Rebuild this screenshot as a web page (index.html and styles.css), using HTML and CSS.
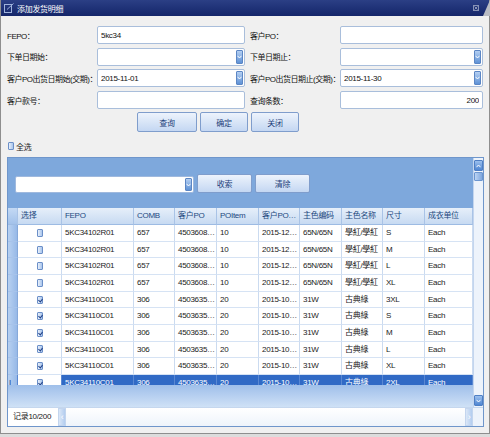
FILE: index.html
```html
<!DOCTYPE html>
<html lang="zh">
<head>
  <meta charset="UTF-8">
  <title>添加发货明细</title>
  <link rel="stylesheet" href="styles.css">
</head>
<body>
  <div class="window">
    <div class="titlebar">
      <svg class="title-icon" width="10" height="10" viewBox="0 0 10 10"><rect x="0.5" y="1.5" width="7" height="8" fill="none" stroke="#9fb3dc"/><path d="M3 6.5 L9.5 0.5" stroke="#9fb3dc"/></svg>
      <span class="title">添加发货明细</span>
      <svg class="close-icon" width="6" height="6" viewBox="0 0 6 6"><rect x="0.5" y="0.5" width="5" height="5" fill="none" stroke="#8792b5"/><path d="M1.5 1.5 L4.5 4.5 M4.5 1.5 L1.5 4.5" stroke="#8792b5"/></svg>
      <svg class="corner" width="7" height="16" viewBox="0 0 7 16"><polygon points="7,0 7,16 0,16" fill="#b9bcc4"/></svg>
    </div>

    <div class="content">
      <!-- query conditions -->
      <div class="query-form">
        <label class="lbl">FEPO：</label>
        <div class="field"><input type="text" value="5kc34"></div>
        <label class="lbl lbl-right">客户PO：</label>
        <div class="field"><input type="text"></div>

        <label class="lbl">下单日期始：</label>
        <div class="field"><input type="text"><span class="drop"><svg width="5" height="4" viewBox="0 0 5 4"><path d="M0.5 0.8 L2.5 3 L4.5 0.8" stroke="#fff" fill="none"/></svg></span></div>
        <label class="lbl lbl-right">下单日期止：</label>
        <div class="field"><input type="text"><span class="drop"><svg width="5" height="4" viewBox="0 0 5 4"><path d="M0.5 0.8 L2.5 3 L4.5 0.8" stroke="#fff" fill="none"/></svg></span></div>

        <label class="lbl">客户PO出货日期始(交期)：</label>
        <div class="field"><input type="text" value="2015-11-01"><span class="drop"><svg width="5" height="4" viewBox="0 0 5 4"><path d="M0.5 0.8 L2.5 3 L4.5 0.8" stroke="#fff" fill="none"/></svg></span></div>
        <label class="lbl lbl-right">客户PO出货日期止(交期)：</label>
        <div class="field"><input type="text" value="2015-11-30"><span class="drop"><svg width="5" height="4" viewBox="0 0 5 4"><path d="M0.5 0.8 L2.5 3 L4.5 0.8" stroke="#fff" fill="none"/></svg></span></div>

        <label class="lbl">客户款号：</label>
        <div class="field"><input type="text"></div>
        <label class="lbl lbl-right">查询条数：</label>
        <div class="field"><input type="text" class="num" value="200"></div>
      </div>

      <div class="actions">
        <button class="btn btn-query">查询</button>
        <button class="btn">确定</button>
        <button class="btn">关闭</button>
      </div>

      <div class="select-all"><span class="chk"></span>全选</div>

      <!-- result grid -->
      <div class="grid-panel">
        <div class="grid-main">
          <div class="grid-toolbar">
            <div class="combo"><span class="combo-text"></span><span class="drop"><svg width="5" height="4" viewBox="0 0 5 4"><path d="M0.5 0.8 L2.5 3 L4.5 0.8" stroke="#fff" fill="none"/></svg></span></div>
            <button class="btn btn-tool">收索</button>
            <button class="btn btn-tool">清除</button>
          </div>

          <div class="grid-row grid-head">
            <div class="cell rowhead"></div>
            <div class="cell">选择</div>
            <div class="cell">FEPO</div>
            <div class="cell">COMB</div>
            <div class="cell">客户PO</div>
            <div class="cell">POItem</div>
            <div class="cell">客户PO出货日期</div>
            <div class="cell">主色编码</div>
            <div class="cell">主色名称</div>
            <div class="cell">尺寸</div>
            <div class="cell">成衣单位</div>
          </div>

          <div class="grid-view">
            <div class="grid-row">
              <div class="cell rowhead"></div><div class="cell center"><span class="chk"></span></div>
              <div class="cell">5KC34102R01</div><div class="cell">657</div><div class="cell">4503608011</div><div class="cell">10</div>
              <div class="cell">2015-12-01</div><div class="cell">65N/65N</div><div class="cell">學紅/學紅</div><div class="cell">S</div><div class="cell">Each</div>
            </div>
            <div class="grid-row">
              <div class="cell rowhead"></div><div class="cell center"><span class="chk"></span></div>
              <div class="cell">5KC34102R01</div><div class="cell">657</div><div class="cell">4503608011</div><div class="cell">10</div>
              <div class="cell">2015-12-01</div><div class="cell">65N/65N</div><div class="cell">學紅/學紅</div><div class="cell">M</div><div class="cell">Each</div>
            </div>
            <div class="grid-row">
              <div class="cell rowhead"></div><div class="cell center"><span class="chk"></span></div>
              <div class="cell">5KC34102R01</div><div class="cell">657</div><div class="cell">4503608011</div><div class="cell">10</div>
              <div class="cell">2015-12-01</div><div class="cell">65N/65N</div><div class="cell">學紅/學紅</div><div class="cell">L</div><div class="cell">Each</div>
            </div>
            <div class="grid-row">
              <div class="cell rowhead"></div><div class="cell center"><span class="chk"></span></div>
              <div class="cell">5KC34102R01</div><div class="cell">657</div><div class="cell">4503608011</div><div class="cell">10</div>
              <div class="cell">2015-12-01</div><div class="cell">65N/65N</div><div class="cell">學紅/學紅</div><div class="cell">XL</div><div class="cell">Each</div>
            </div>
            <div class="grid-row">
              <div class="cell rowhead"></div><div class="cell center"><span class="chk on"></span></div>
              <div class="cell">5KC34110C01</div><div class="cell">306</div><div class="cell">4503635012</div><div class="cell">20</div>
              <div class="cell">2015-10-30</div><div class="cell">31W</div><div class="cell">古典綠</div><div class="cell">3XL</div><div class="cell">Each</div>
            </div>
            <div class="grid-row">
              <div class="cell rowhead"></div><div class="cell center"><span class="chk on"></span></div>
              <div class="cell">5KC34110C01</div><div class="cell">306</div><div class="cell">4503635012</div><div class="cell">20</div>
              <div class="cell">2015-10-30</div><div class="cell">31W</div><div class="cell">古典綠</div><div class="cell">S</div><div class="cell">Each</div>
            </div>
            <div class="grid-row">
              <div class="cell rowhead"></div><div class="cell center"><span class="chk on"></span></div>
              <div class="cell">5KC34110C01</div><div class="cell">306</div><div class="cell">4503635012</div><div class="cell">20</div>
              <div class="cell">2015-10-30</div><div class="cell">31W</div><div class="cell">古典綠</div><div class="cell">M</div><div class="cell">Each</div>
            </div>
            <div class="grid-row">
              <div class="cell rowhead"></div><div class="cell center"><span class="chk on"></span></div>
              <div class="cell">5KC34110C01</div><div class="cell">306</div><div class="cell">4503635012</div><div class="cell">20</div>
              <div class="cell">2015-10-30</div><div class="cell">31W</div><div class="cell">古典綠</div><div class="cell">L</div><div class="cell">Each</div>
            </div>
            <div class="grid-row">
              <div class="cell rowhead"></div><div class="cell center"><span class="chk on"></span></div>
              <div class="cell">5KC34110C01</div><div class="cell">306</div><div class="cell">4503635012</div><div class="cell">20</div>
              <div class="cell">2015-10-30</div><div class="cell">31W</div><div class="cell">古典綠</div><div class="cell">XL</div><div class="cell">Each</div>
            </div>
            <div class="grid-row selected">
              <div class="cell rowhead">I</div><div class="cell center edit"><span class="chk on"></span></div>
              <div class="cell">5KC34110C01</div><div class="cell">306</div><div class="cell">4503635012</div><div class="cell">20</div>
              <div class="cell">2015-10-30</div><div class="cell">31W</div><div class="cell">古典綠</div><div class="cell">2XL</div><div class="cell">Each</div>
            </div>
          </div>

          <div class="grid-band"></div>
        </div>

        <div class="vscroll">
          <span class="sb-btn"><svg width="5" height="4" viewBox="0 0 5 4"><path d="M0.5 3.2 L2.5 1 L4.5 3.2" stroke="#fff" fill="none"/></svg></span>
          <span class="sb-thumb"></span>
          <span class="sb-track"></span>
          <span class="sb-btn"><svg width="5" height="4" viewBox="0 0 5 4"><path d="M0.5 0.8 L2.5 3 L4.5 0.8" stroke="#fff" fill="none"/></svg></span>
        </div>

        <div class="grid-footer">
          <span class="record">记录10/200</span>
          <div class="hscroll">
            <span class="hs-btn">‹</span>
            <span class="hs-track"></span>
            <span class="hs-btn">›</span>
          </div>
          <span class="corner-box"></span>
        </div>
      </div>
    </div>
  </div>
</body>
</html>
```

FILE: styles.css
```css
* {
  box-sizing: border-box;
}
body {
  margin: 0;
  background: #dcdcdc;
  font-family: "Liberation Sans", "Noto Sans CJK SC", sans-serif;
  font-size: 8px;
  letter-spacing: -0.3px;
  color: #1b1b1b;
}
.window {
  width: 490px;
  height: 434px;
  background: #f0f0f0;
  border: 1px solid #8e8e8e;
  border-top: none;
}
.titlebar {
  position: relative;
  height: 16px;
  display: flex;
  align-items: center;
  padding: 0 0 0 3px;
  background: linear-gradient(#2b3f85, #14266a);
  color: #fff;
}
.title {
  margin-left: 3px;
}
.close-icon {
  margin-left: auto;
  margin-right: 10px;
}
.corner {
  position: absolute;
  right: -1px;
  top: 0;
}
.content {
  padding: 10px 4px 0 6px;
}
.query-form {
  display: grid;
  grid-template-columns: 90px 148px 95px 143px;
  grid-auto-rows: 18px;
  row-gap: 3.7px;
  align-items: center;
}
.lbl {
  white-space: nowrap;
  letter-spacing: -0.5px;
  color: #111;
}
.lbl-right {
  padding-left: 5px;
}
.field {
  display: flex;
  height: 18px;
  background: #fff;
  border: 1px solid #a9bedb;
  border-radius: 2px;
}
.field input {
  flex: 1;
  min-width: 0;
  border: none;
  outline: none;
  padding: 0 3px;
  font: inherit;
  letter-spacing: inherit;
  color: #111;
  background: transparent;
}
.field input.num {
  text-align: right;
}
.drop {
  width: 7px;
  margin: 1px;
  display: flex;
  align-items: center;
  justify-content: center;
  border-radius: 1px;
  background: linear-gradient(#b4cff2, #5f92d6);
  border: 1px solid #5c86c4;
}
.actions {
  display: flex;
  gap: 3px;
  margin: 3px 0 0 130px;
}
.btn {
  width: 48px;
  height: 20px;
  padding: 0;
  font: inherit;
  letter-spacing: inherit;
  color: #1d3f7a;
  border: 1px solid #7f9dcc;
  border-radius: 2px;
  background: linear-gradient(#edf3fc, #c4d7f2);
}
.btn-query {
  width: 60px;
}
.select-all {
  display: flex;
  align-items: center;
  gap: 2px;
  height: 10px;
  margin: 9px 0 0 1px;
}
.chk {
  display: inline-block;
  position: relative;
  width: 6px;
  height: 8px;
  border: 1px solid #6b8fc8;
  border-radius: 1px;
  background: linear-gradient(90deg, #e8f0fb, #a9c5ec);
}
.chk.on::after {
  content: "";
  position: absolute;
  left: 1px;
  top: 1px;
  width: 2px;
  height: 3px;
  border-right: 1px solid #1f3f86;
  border-bottom: 1px solid #1f3f86;
  transform: rotate(40deg);
}

/* grid panel */
.grid-panel {
  margin-top: 6px;
  width: 477px;
  height: 270px;
  border: 1px solid #6f96cb;
  display: grid;
  grid-template-columns: 465px 10px;
  grid-template-rows: 249px 19px;
}
.grid-main {
  display: flex;
  flex-direction: column;
  background: #7ea8dc;
  overflow: hidden;
}
.grid-toolbar {
  height: 50px;
  flex: none;
  display: flex;
  align-items: flex-end;
  gap: 3px;
  padding: 0 0 15px 7px;
}
.combo {
  display: flex;
  width: 179px;
  height: 17px;
  background: #fff;
  border: 1px solid #9fb9de;
  border-radius: 2px;
}
.combo-text {
  flex: 1;
}
.btn-tool {
  width: 55px;
  height: 19px;
}
.grid-row {
  display: grid;
  grid-template-columns: 10px 44px 72px 41px 42px 42px 41px 42px 41px 42px 48px;
  height: 16.67px;
  flex: none;
}
.cell {
  padding: 0 0 0 3px;
  line-height: 15.67px;
  white-space: nowrap;
  overflow: hidden;
  text-overflow: ellipsis;
  border-right: 1px solid #cbdbf0;
  border-bottom: 1px solid #d6e3f4;
  background: #fff;
}
.cell.center {
  display: flex;
  align-items: center;
  justify-content: center;
  padding: 0;
}
.cell.rowhead {
  padding: 0 1px;
  background: linear-gradient(90deg, #b8d1f1, #97b9e7);
  border-right: 1px solid #86a9da;
  border-bottom: 1px solid #a7c3ea;
  color: #1f3f86;
}
.grid-head {
  height: 17px;
}
.grid-head .cell {
  line-height: 16px;
  color: #22487e;
  background: linear-gradient(#e6effa, #c7daf2);
  border-right: 1px solid #a9c3e6;
  border-bottom: 1px solid #9dbbe3;
}
.grid-head .cell.rowhead {
  background: linear-gradient(#c4d9f4, #a2c1ea);
}
.grid-view {
  height: 160px;
  flex: none;
  overflow: hidden;
  background: #fff;
}
.grid-row.selected .cell {
  background: #316ac5;
  color: #fff;
  border-right-color: #5a88d2;
}
.grid-row.selected .cell.edit {
  background: #fff;
}
.grid-row.selected .cell.rowhead {
  background: linear-gradient(90deg, #b8d1f1, #97b9e7);
  color: #1f3f86;
}
.grid-band {
  height: 22px;
  flex: none;
  background: linear-gradient(#9fbfea, #cfe1f6);
}
.vscroll {
  display: flex;
  flex-direction: column;
  padding: 2px 0 1px;
  background: #edf3fb;
  border-left: 1px solid #c3d5ee;
}
.sb-btn {
  height: 11px;
  display: flex;
  align-items: center;
  justify-content: center;
  border: 1px solid #4f7fc4;
  border-radius: 1px;
  background: linear-gradient(#9cc0ee, #4f86d2);
}
.sb-thumb {
  height: 9px;
  margin-top: 1px;
  border: 1px solid #6c96d0;
  border-radius: 1px;
  background: linear-gradient(90deg, #bcd4f3, #7fa7de);
}
.sb-track {
  flex: 1;
}
.grid-footer {
  grid-column: 1 / -1;
  display: flex;
  background: #fff;
  border-top: 1px solid #c5d7ee;
}
.record {
  width: 50px;
  padding-left: 5px;
  line-height: 17px;
  color: #222;
}
.hscroll {
  display: flex;
  width: 415px;
  background: linear-gradient(#ffffff, #eef4fb);
}
.hs-btn {
  width: 8px;
  display: flex;
  align-items: center;
  justify-content: center;
  color: #fff;
  font-size: 9px;
  background: linear-gradient(90deg, #dbe7f7, #b3cdef);
  border: 1px solid #c3d5ee;
}
.hs-track {
  flex: 1;
}
.corner-box {
  flex: 1;
  background: #edf3fb;
}
```
